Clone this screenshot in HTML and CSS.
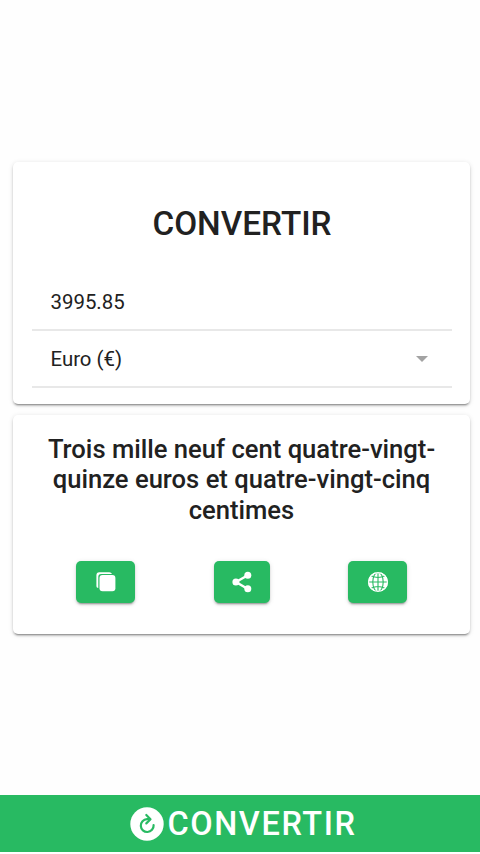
FILE: index.html
```html
<!DOCTYPE html>
<html lang="fr">
<head>
<meta charset="utf-8">
<title>Convertir</title>
<link rel="stylesheet" href="styles.css">
</head>
<body>
<main class="content">
  <section class="card form">
    <h1 class="title"><span>CONVERTIR</span></h1>
    <div class="field"><span class="amount">3995.85</span></div>
    <div class="field"><span class="currency">Euro (€)</span><i class="caret"></i></div>
  </section>
  <section class="card result">
    <h2 class="words">Trois mille neuf cent quatre-vingt-<br>quinze euros et quatre-vingt-cinq<br>centimes</h2>
    <div class="actions">
      <button class="btn copy" aria-label="Copier">
        <svg width="22" height="22" viewBox="0 0 22 22"><path d="M1.4 15.2V4.2Q1.4 1.3 4.3 1.3H14.3Q16.3 1.3 17 2.9H6.2Q3.3 2.9 3.3 5.8V17Q1.4 16.6 1.4 15.2Z" fill="#fff"/><rect x="4.5" y="4.1" width="15.9" height="16.2" rx="3" fill="#fff"/></svg>
      </button>
      <button class="btn share" aria-label="Partager">
        <svg width="22" height="22" viewBox="0 0 22 22"><path d="M16.8 4.2L5 11L16.8 18" fill="none" stroke="#fff" stroke-width="2.4"/><circle cx="16.8" cy="4.2" r="3.5" fill="#fff"/><circle cx="4.9" cy="11" r="3.5" fill="#fff"/><circle cx="16.8" cy="17.8" r="3.5" fill="#fff"/></svg>
      </button>
      <button class="btn globe" aria-label="Langue">
        <svg width="22" height="22" viewBox="0 0 22 22"><circle cx="11" cy="11" r="10" fill="#fff"/><g fill="none" stroke="#28ba62" stroke-width="1.1"><path d="M11 1V21M1 11H21M4 4.8Q11 8.3 18 4.8M4 17.2Q11 13.7 18 17.2"/><ellipse cx="11" cy="11" rx="5.2" ry="9.8"/></g><circle cx="11" cy="11" r="9.4" fill="none" stroke="#fff" stroke-width="1.2"/></svg>
      </button>
    </div>
  </section>
</main>
<footer class="footer">
  <svg width="34" height="34" viewBox="0 0 34 34"><circle cx="17" cy="17" r="16.7" fill="#fff"/><path d="M19 12.2H17A6.4 6.4 0 1 0 23.6 18.2" fill="none" stroke="#28ba62" stroke-width="2.2" stroke-linecap="round"/><path d="M16.3 8L20.5 12.2L16.3 16.4" fill="none" stroke="#28ba62" stroke-width="2.2" stroke-linecap="round" stroke-linejoin="round"/></svg>
  <span class="footer-label">CONVERTIR</span>
</footer>
</body>
</html>
```
FILE: styles.css
```css
* { box-sizing: border-box; }
body {
  margin: 0;
  height: 854px;
  padding-bottom: 2px;
  display: flex;
  flex-direction: column;
  overflow: hidden;
  background: #fefefe;
  color: #212121;
  font-family: Roboto, "Liberation Sans", sans-serif;
}
.content {
  flex: 1;
  display: flex;
  flex-direction: column;
  gap: 11px;
  padding: 162px 10px 0 13px;
}
.card {
  background: #fff;
  border-radius: 5px;
  box-shadow: 0 3px 1px -2px rgba(0,0,0,.22), 0 2px 2px 0 rgba(0,0,0,.18), 0 1px 5px 0 rgba(0,0,0,.13);
}
.form { height: 242px; padding: 36px 18px 0 19px; }
.title {
  margin: 0 0 24px;
  height: 51px;
  line-height: 51px;
  text-align: center;
  font-size: 33.3px;
  font-weight: 500;
}
.field {
  height: 57px;
  display: flex;
  align-items: center;
  justify-content: space-between;
  padding: 0 24px 0 18.5px;
  border-bottom: 2px solid #e8e8e8;
  font-size: 20.4px;
}
.form .field:nth-of-type(1) { height: 58px; padding-top: 2px; }
.form .field:nth-of-type(2) { padding-top: 1px; }
.caret {
  border-left: 6px solid transparent;
  border-right: 6px solid transparent;
  border-top: 6px solid #a3a3a3;
}
.result { height: 219px; padding-top: 18.5px; }
.words {
  margin: 0;
  text-align: center;
  font-size: 25.6px;
  line-height: 30.7px;
  font-weight: 500;
}
.actions { display: flex; margin: 35px 0 0 63px; }
.btn {
  width: 59px;
  height: 42px;
  padding: 0;
  border: 0;
  border-radius: 5px;
  display: flex;
  align-items: center;
  justify-content: center;
  background: #28ba62;
  box-shadow: 0 3px 1px -2px rgba(0,0,0,.2), 0 2px 2px 0 rgba(0,0,0,.14), 0 1px 5px 0 rgba(0,0,0,.12);
}
.share { width: 56px; margin: 0 78px 0 79px; }
.footer {
  height: 57px;
  display: flex;
  align-items: center;
  justify-content: center;
  gap: 3px;
  padding-left: 7px;
  background: #28ba62;
  color: #fff;
}
.footer-label { font-size: 32.5px; line-height: 38px; margin-top: 1px; font-weight: 500; letter-spacing: 1.6px; }
```
